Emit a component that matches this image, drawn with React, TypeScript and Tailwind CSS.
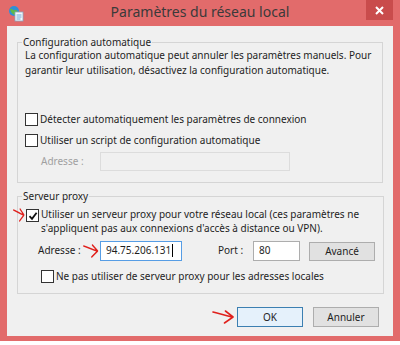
import React from "react";

const font = { fontFamily: '"Noto Sans", "Open Sans", sans-serif' };

function Check({ checked = false }: { checked?: boolean }) {
  return (
    <span className="inline-flex h-[13px] w-[13px] shrink-0 items-center justify-center border border-[#333] bg-white">
      {checked && (
        <svg width="10" height="10" viewBox="0 0 10 10">
          <path d="M1.5 5.2 L4 7.8 L8.6 1.8" stroke="#111" strokeWidth="1.8" fill="none" />
        </svg>
      )}
    </span>
  );
}

function Arrow({ className }: { className: string }) {
  return (
    <svg className={className} height="16" viewBox="0 0 24 16" preserveAspectRatio="none">
      <path d="M1 3 C6 4 12 6 21 8 M14 2 L22 8 L13 14" stroke="#e0201c" strokeWidth="1.6" fill="none" strokeLinecap="round" strokeLinejoin="round" />
    </svg>
  );
}

export default function App() {
  return (
    <div className="relative h-[345px] w-[400px] overflow-hidden bg-white text-[10px] text-[#1e1e1e]" style={font}>
      <div className="flex h-[341px] w-[400px] flex-col bg-[#e26b6b]">
        {/* title bar */}
        <div className="relative flex h-[26px] shrink-0 items-start">
          <svg className="ml-[8px] mt-[5px]" width="16" height="17" viewBox="0 0 16 17">
            <circle cx="6" cy="6" r="5" fill="#2e8fd8" />
            <path d="M2 4 C4 3 5 6 7 5 C8 4 9 6 10 7 L8 10 C5 10 3 8 2 4Z" fill="#5fb84a" />
            <rect x="7" y="7" width="8" height="9" fill="#f4f8fb" stroke="#8aa6c0" strokeWidth="0.8" />
            <path d="M8.5 10h5M8.5 12h5M8.5 14h4" stroke="#4a90d0" strokeWidth="0.8" />
          </svg>
          <div className="absolute left-0 right-0 top-[2px] text-center text-[14px] leading-[20px] text-[#3a3a3a]">
            Paramètres du réseau local
          </div>
          <div className="absolute right-[7px] top-0 flex h-[20px] w-[27px] items-center justify-center bg-[#c94c4c]">
            <svg width="9" height="9" viewBox="0 0 9 9">
              <path d="M1 1 L8 8 M8 1 L1 8" stroke="#fff" strokeWidth="2" />
            </svg>
          </div>
        </div>
        {/* content */}
        <div className="relative mx-[7px] flex h-[310px] flex-col bg-[#f0f0f0] px-[10px]">
          <fieldset className="mt-[10px] border border-[#d5d5d5] px-[7px] pb-[11px]">
            <legend className="ml-[-3px] px-[1px] leading-[12px]">Configuration automatique</legend>
            <p className="mt-0 leading-[15px]">
              La configuration automatique peut annuler les paramètres manuels. Pour
              <br />
              garantir leur utilisation, désactivez la configuration automatique.
            </p>
            <div className="mt-[34px] flex items-center gap-[2px] leading-[15px]">
              <Check />
              <span>Détecter automatiquement les paramètres de connexion</span>
            </div>
            <div className="mt-[6px] flex items-center gap-[2px] leading-[15px]">
              <Check />
              <span>Utiliser un script de configuration automatique</span>
            </div>
            <div className="mt-[4px] flex items-center">
              <span className="ml-[16px] w-[59px] text-[#a0a0a0]">Adresse :</span>
              <div className="h-[19px] w-[190px] border border-[#dcdcdc] bg-[#f0f0f0]" />
            </div>
          </fieldset>
          <fieldset className="mt-[7px] border border-[#d5d5d5] px-[8px] pb-[9px]">
            <legend className="ml-[-4px] px-[1px] leading-[12px]">Serveur proxy</legend>
            <div className="relative mt-[5px] flex items-start gap-[2px] leading-[14px]">
              <Arrow className="absolute left-[-13px] top-[0px] w-[12px]" />
              <span className="mt-[2px] flex"><Check checked /></span>
              <span>
                Utiliser un serveur proxy pour votre réseau local (ces paramètres ne
                <br />
                s'appliquent pas aux connexions d'accès à distance ou VPN).
              </span>
            </div>
            <div className="mt-[5px] flex items-center leading-[15px]">
              <span className="ml-[12px] w-[45px] whitespace-nowrap">Adresse :</span>
              <Arrow className="mr-[1px] w-[16px]" />
              <div className="flex h-[20px] w-[82px] items-center border border-[#569de5] bg-white pl-[5px]">
                94.75.206.131<span className="ml-[1px] h-[13px] w-[1px] bg-black" />
              </div>
              <span className="ml-[36px] w-[35px]">Port :</span>
              <div className="flex h-[20px] w-[47px] items-center border border-[#adadad] bg-white pl-[5px]">80</div>
              <div className="ml-[9px] mt-[2px] flex h-[19px] w-[66px] items-center justify-center border border-[#adadad] bg-[#e1e1e1]">
                Avancé
              </div>
            </div>
            <div className="mt-[8px] ml-[15px] flex items-center gap-[2px] leading-[15px]">
              <Check />
              <span>Ne pas utiliser de serveur proxy pour les adresses locales</span>
            </div>
          </fieldset>
          <div className="mt-[13px] flex items-center justify-end pr-[4px]">
            <Arrow className="mr-[2px] w-[23px]" />
            <div className="flex h-[20px] w-[66px] items-center justify-center border border-[#3c7fb1] bg-[#e5f1fb]">OK</div>
            <div className="ml-[10px] flex h-[20px] w-[66px] items-center justify-center border border-[#adadad] bg-[#e1e1e1]">
              Annuler
            </div>
          </div>
        </div>
      </div>
      <div className="h-[4px] overflow-hidden pl-[27px]">
        <div className="mt-[-13px] text-[12px] font-bold uppercase tracking-[1px] text-black">
          Configurer le serveur proxy du navigateur Internet
        </div>
      </div>
    </div>
  );
}
